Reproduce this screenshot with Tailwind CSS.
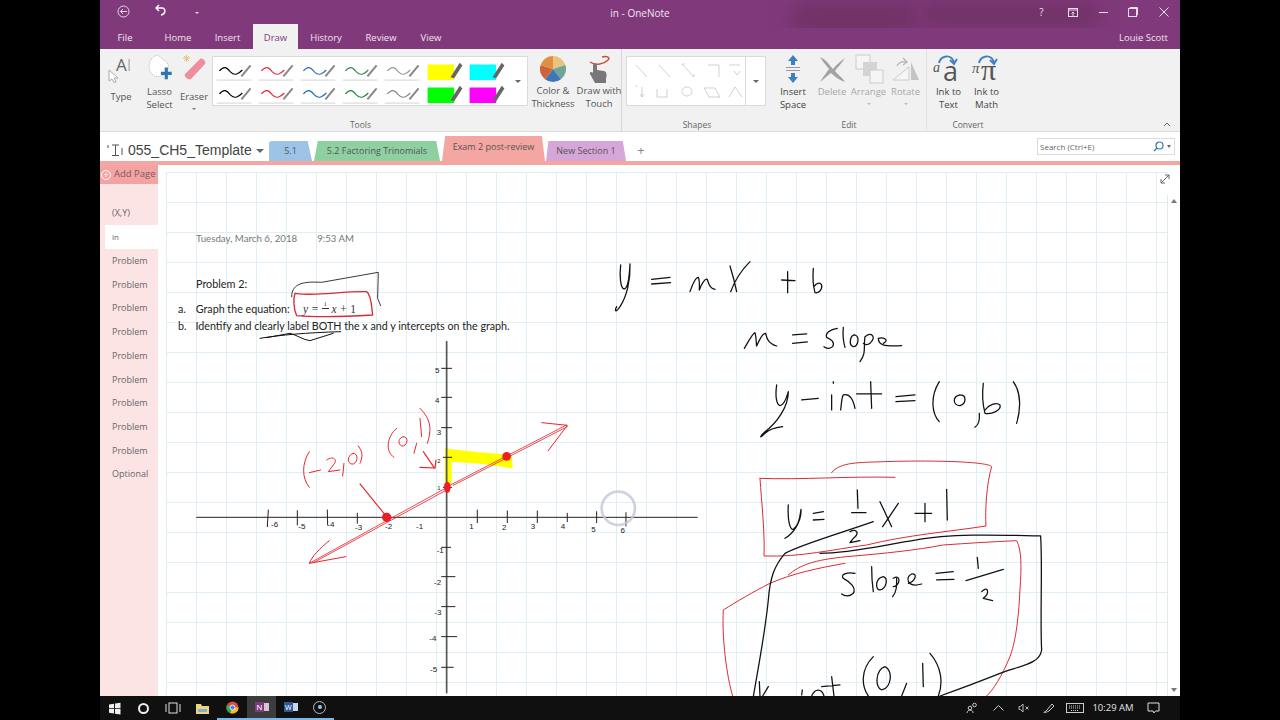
<!DOCTYPE html>
<html lang="en">
<head>
<meta charset="UTF-8">
<title>in - OneNote</title>
<script src="https://cdn.jsdelivr.net/npm/@tailwindcss/browser@4"></script>
</head>
<body class="bg-black overflow-hidden font-['Open_Sans',sans-serif]">
<svg class="hidden">
  <symbol id="pen" viewBox="0 0 40 24">
    <path d="M3 13C8 7 11 9 15 14C20 19 24 16 28 12" fill="none" stroke="currentColor" stroke-width="1.300"/>
    <path d="M27 19L37 7" stroke="#888" stroke-width="2.200"/>
    <path d="M0 23H38" stroke="#d0d0d0"/>
  </symbol>
  <symbol id="marker" viewBox="0 0 40 24">
    <rect x="1" y="6" width="29" height="17" fill="currentColor"/>
    <path d="M26 20L36 4L39 7L30 21Z" fill="#666"/>
  </symbol>
</svg>

<div class="flex w-[1280px] h-[720px]">
  <div class="w-[100px] bg-black"></div>

  <div class="w-[1080px] flex flex-col bg-white">
    <!-- title bar -->
    <div class="relative h-[28px] bg-[#80397b] text-white flex items-center">
      <div class="absolute left-[690px] top-0 w-[130px] h-[40px] bg-[#733369] blur-sm rounded-full"></div>
      <div class="absolute left-[820px] top-0 w-[180px] h-[30px] bg-[#733369] blur-sm rounded-full"></div>
      <svg class="absolute left-[17px] top-[5px]" width="13" height="13" viewBox="0 0 13 13" fill="none" stroke="#e8d8e8"><circle cx="6.500" cy="6.500" r="5.500"/><path d="M10 6.500H3.500M6 4L3.500 6.500L6 9"/></svg>
      <svg class="absolute left-[54px] top-[4px]" width="13" height="13" viewBox="0 0 13 13" fill="none" stroke="#fff" stroke-width="1.400"><path d="M5 1L2 4L5 7M2 4H8C12 4 12 10 7 11"/></svg>
      <div class="absolute left-[95px] top-[12px] w-0 h-0 border-x-[2px] border-x-transparent border-t-[2px] border-t-[#e8d8e8]"></div>
      <div class="relative w-full text-center text-[10px] text-[#f1e6f0] -mt-[2px]">in - OneNote</div>
      <div class="absolute right-0 top-0 h-[24px] flex items-center text-[#eadcea]">
        <span class="w-[31px] text-center text-[10px]">?</span>
        <span class="w-[31px] flex justify-center"><svg width="10" height="9" viewBox="0 0 10 9" fill="none" stroke="#eadcea"><rect x=".5" y=".5" width="9" height="8"/><path d="M1 2H9M5 8V4M3.500 5.500L5 4L6.500 5.500"/></svg></span>
        <span class="w-[30px] flex justify-center"><span class="w-[9px] h-px bg-[#eadcea]"></span></span>
        <span class="w-[30px] flex justify-center"><svg width="10" height="10" viewBox="0 0 10 10" fill="none" stroke="#eadcea"><rect x=".5" y="1.500" width="8" height="8"/><path d="M2 1V.5H9.500V8H9"/></svg></span>
        <span class="w-[32px] flex justify-center"><svg width="10" height="10" viewBox="0 0 10 10" stroke="#eadcea"><path d="M.5 .5L9.500 9.500M9.500 .5L.5 9.500"/></svg></span>
      </div>
    </div>

    <!-- menu tabs -->
    <div class="h-[21px] bg-[#80397b] flex text-[9.500px] text-[#f0e4ef] items-stretch relative">
      <span class="w-[50px] flex items-center justify-center">File</span>
      <span class="w-[56px] flex items-center justify-center">Home</span>
      <span class="w-[47px] flex items-center justify-center -ml-[2px] mr-[2px]">Insert</span>
      <span class="w-[45px] -mt-[4px] bg-[#f1f1f1] text-[#80397b] flex items-center justify-center pt-[4px]">Draw</span>
      <span class="w-[56px] flex items-center justify-center">History</span>
      <span class="w-[54px] flex items-center justify-center">Review</span>
      <span class="w-[46px] flex items-center justify-center">View</span>
      <span class="absolute right-[12px] top-[3px] text-[9.500px]">Louie Scott</span>
    </div>

    <!-- ribbon -->
    <div class="h-[83px] bg-[#f1f1f1] flex border-b border-[#dcdcdc] text-[9.500px] leading-[13px] text-[#555] relative">
      <!-- tools -->
      <div class="w-[522px] border-r border-[#d6d6d6] flex flex-col">
        <div class="h-[69px] flex pt-[6px]">
          <div class="w-[42px] flex flex-col items-center relative">
            <div class="h-[30px] w-full relative">
              <span class="absolute left-[16px] top-0 text-[17px] leading-[20px] text-[#666]">A</span>
              <span class="absolute left-[27px] top-[1px] text-[16px] leading-[18px] text-[#888] font-light">I</span>
              <svg class="absolute left-[8px] top-[14px]" width="12" height="14" viewBox="0 0 12 14" fill="#fff" stroke="#aaa"><path d="M1 1L10 9H6L8 13L6 13.500L4 10L1 12Z"/></svg>
            </div>
            <span class="mt-[5px]">Type</span>
          </div>
          <div class="w-[35px] flex flex-col items-center">
            <svg width="30" height="27" viewBox="0 0 30 30" class="-mt-[1px]"><path d="M5 6C9 0 14 1 17 5C21 8 25 9 24 16C22 22 17 26 10 25C3 22 1 13 5 6Z" fill="#fff" stroke="#bbb" stroke-dasharray="1.500 1"/><path d="M22 15V28M16 21.500H28" stroke="#2f75b5" stroke-width="3.500"/></svg>
            <span class="mt-[4px] text-center">Lasso Select</span>
          </div>
          <div class="w-[34px] flex flex-col items-center">
            <svg width="28" height="28" viewBox="0 0 28 28" class="-mt-[1px]"><path d="M3 4H10M6.500 1V8M4 2L9 7M9 2L4 7" stroke="#e8c36a"/><path d="M5 20L20 5C22 3 27 8 25 10L11 25C9 27 3 22 5 20Z" fill="#ee8e9e"/></svg>
            <span class="mt-[8px]">Eraser</span>
            <span class="mt-[5px] w-0 h-0 border-x-[2px] border-x-transparent border-t-[2px] border-t-[#777]"></span>
          </div>
          <div class="w-[316px] h-[50px] mt-[1px] ml-[1px] bg-white border border-[#dadada] flex">
            <div class="grid grid-cols-7 gap-x-[2px] gap-y-[1px] p-[2px] w-[296px]">
              <svg class="w-[40px] h-[22px] text-black"><use href="#pen"/></svg>
              <svg class="w-[40px] h-[22px] text-[#d9363e]"><use href="#pen"/></svg>
              <svg class="w-[40px] h-[22px] text-[#3a70b5]"><use href="#pen"/></svg>
              <svg class="w-[40px] h-[22px] text-[#2f8a4f]"><use href="#pen"/></svg>
              <svg class="w-[40px] h-[22px] text-[#999]"><use href="#pen"/></svg>
              <svg class="w-[40px] h-[22px] text-[#ffff00]"><use href="#marker"/></svg>
              <svg class="w-[40px] h-[22px] text-[#00ffff]"><use href="#marker"/></svg>
              <svg class="w-[40px] h-[22px] text-black"><use href="#pen"/></svg>
              <svg class="w-[40px] h-[22px] text-[#e8262d]"><use href="#pen"/></svg>
              <svg class="w-[40px] h-[22px] text-[#1d68b5]"><use href="#pen"/></svg>
              <svg class="w-[40px] h-[22px] text-[#178a3d]"><use href="#pen"/></svg>
              <svg class="w-[40px] h-[22px] text-[#888]"><use href="#pen"/></svg>
              <svg class="w-[40px] h-[22px] text-[#00ff00]"><use href="#marker"/></svg>
              <svg class="w-[40px] h-[22px] text-[#ff00ff]"><use href="#marker"/></svg>
            </div>
            <div class="flex-1 flex items-center justify-center"><span class="w-0 h-0 border-x-[3px] border-x-transparent border-t-[3px] border-t-[#666]"></span></div>
          </div>
          <div class="w-[48px] flex flex-col items-center ml-[1px]">
            <svg width="28" height="28" viewBox="0 0 28 28"><path d="M14 14L14 1A13 13 0 0 1 26.400 10Z" fill="#e8c27e"/><path d="M14 14L26.400 10A13 13 0 0 1 22 24.300Z" fill="#6fa595"/><path d="M14 14L22 24.300A13 13 0 0 1 6 24.300Z" fill="#3f76b8"/><path d="M14 14L6 24.300A13 13 0 0 1 1.600 10Z" fill="#cf6236"/><path d="M14 14L1.600 10A13 13 0 0 1 14 1Z" fill="#e08f3e"/></svg>
            <span class="mt-[1px] text-center whitespace-nowrap">Color &amp;<br>Thickness</span>
          </div>
          <div class="w-[44px] flex flex-col items-center">
            <svg width="30" height="29" viewBox="0 0 30 29"><path d="M6 7C12 11 20 9 24 5C27 2 22 1 18 2" fill="none" stroke="#c9503c" stroke-width="1.500"/><path d="M9 10C10 8 13 8 13 11V15L20 16C23 17 23 20 22 24V28H11L6 19C5 17 8 16 9 18Z" fill="#777"/></svg>
            <span class="text-center whitespace-nowrap">Draw with<br>Touch</span>
          </div>
        </div>
        <div class="text-center text-[8.500px] leading-[13px] mt-[2px] text-[#666]">Tools</div>
      </div>
      <!-- shapes -->
      <div class="w-[150px] flex flex-col">
        <div class="h-[69px] pt-[7px] pl-[4px]">
          <div class="w-[140px] h-[50px] bg-white border border-[#dadada] flex">
            <svg width="118" height="48" viewBox="0 0 118 48" fill="none" stroke="#bdbdbd" stroke-width=".7">
              <path d="M9 8L20 20M32 8L43 20M55 7L67 20M55 7H58M67 20V17M81 8H92V20M102 8H113M107 14L110 18L113 14"/>
              <path d="M9 28L10 30M15 30V40L17 37M13 37L15 40M30 32V40H40V32M60 30A5 4.500 0 1 0 60 39A5 4.500 0 1 0 60 30M77 31H88L93 40H82ZM102 40L108 30L115 40"/>
            </svg>
            <div class="flex-1 border-l border-[#dadada] flex items-center justify-center"><span class="w-0 h-0 border-x-[3px] border-x-transparent border-t-[3px] border-t-[#666]"></span></div>
          </div>
        </div>
        <div class="text-center text-[8.500px] leading-[13px] mt-[2px] text-[#666]">Shapes</div>
      </div>
      <!-- edit -->
      <div class="w-[155px] border-r border-[#e2e2e2] flex flex-col">
        <div class="h-[69px] flex pt-[5px] text-center">
          <div class="w-[42px] flex flex-col items-center">
            <svg width="16" height="30" viewBox="0 0 16 30"><path d="M8 1L13 7H10V11H6V7H3ZM8 29L13 23H10V19H6V23H3Z" fill="#3f7fc1"/><path d="M1 13.500H15M1 16.500H15" stroke="#999"/></svg>
            <span class="mt-[1px] text-[#444]">Insert<br>Space</span>
          </div>
          <div class="w-[36px] flex flex-col items-center">
            <svg width="30" height="30" viewBox="0 0 30 30"><path d="M3 3C10 6 13 12 16 15C20 10 24 7 28 4C24 10 20 14 18 17C21 21 26 24 28 28C22 26 18 23 14 19C10 22 7 25 3 28C6 23 9 19 12 15C9 11 6 8 3 3Z" fill="#a3a3a3"/></svg>
            <span class="mt-[1px] text-[#a8a8a8]">Delete</span>
          </div>
          <div class="w-[37px] flex flex-col items-center">
            <svg width="30" height="30" viewBox="0 0 30 30"><rect x="2" y="1" width="14" height="14" fill="#f5f5f5" stroke="#ccc"/><rect x="9" y="8" width="14" height="14" fill="#d4d4d4"/><rect x="16" y="16" width="13" height="13" fill="#f5f5f5" stroke="#ccc"/></svg>
            <span class="mt-[1px] text-[#a8a8a8]">Arrange</span>
            <span class="mt-[5px] w-0 h-0 border-x-[2px] border-x-transparent border-t-[2px] border-t-[#bbb]"></span>
          </div>
          <div class="w-[37px] flex flex-col items-center">
            <svg width="30" height="30" viewBox="0 0 30 30"><path d="M20 8L28 26H20Z" fill="#c4c4c4"/><path d="M2 26L18 13V26Z" fill="#f5f5f5" stroke="#ccc"/><path d="M6 12C8 8 11 7 15 8M12 4L16 8L12 11" fill="none" stroke="#bbb" stroke-width="1.500"/></svg>
            <span class="mt-[1px] text-[#a8a8a8]">Rotate</span>
            <span class="mt-[5px] w-0 h-0 border-x-[2px] border-x-transparent border-t-[2px] border-t-[#bbb]"></span>
          </div>
        </div>
        <div class="text-center text-[8.500px] leading-[13px] mt-[2px] text-[#666]">Edit</div>
      </div>
      <!-- convert -->
      <div class="w-[80px] pl-[2px] flex flex-col">
        <div class="h-[69px] flex pt-[5px] text-center text-[#444]">
          <div class="w-[39px] flex flex-col items-center relative">
            <div class="h-[30px] w-full relative text-[#555]">
              <span class="absolute left-[4px] top-[7px] text-[14px] leading-[14px] italic font-['Liberation_Serif']">a</span>
              <span class="absolute left-[14px] top-[3px] text-[27px] leading-[28px]">a</span>
              <svg class="absolute left-[8px] top-0" width="22" height="12" viewBox="0 0 22 12" fill="none" stroke="#3f7fc1" stroke-width="1.800"><path d="M2 9C4 1 14 0 17 8M13 6L17 10L20 5"/></svg>
            </div>
            <span class="mt-[1px]">Ink to<br>Text</span>
          </div>
          <div class="w-[37px] flex flex-col items-center relative">
            <div class="h-[30px] w-full relative text-[#555] font-['Liberation_Serif']">
              <span class="absolute left-[4px] top-[7px] text-[15px] leading-[14px] italic">π</span>
              <span class="absolute left-[13px] top-[1px] text-[30px] leading-[30px]">π</span>
              <svg class="absolute left-[9px] top-0" width="22" height="12" viewBox="0 0 22 12" fill="none" stroke="#3f7fc1" stroke-width="1.800"><path d="M2 9C4 1 14 0 17 8M13 6L17 10L20 5"/></svg>
            </div>
            <span class="mt-[1px]">Ink to<br>Math</span>
          </div>
        </div>
        <div class="text-center text-[8.500px] leading-[13px] mt-[2px] text-[#666]">Convert</div>
      </div>
      <svg class="absolute right-[9px] bottom-[4px]" width="8" height="5" viewBox="0 0 8 5" fill="none" stroke="#666"><path d="M1 4L4 1L7 4"/></svg>
    </div>

    <!-- notebook / section tabs -->
    <div class="h-[29px] bg-white flex items-end relative text-[#555]">
      <div class="absolute left-[7px] top-[8px] flex items-center gap-[3px]">
        <svg width="18" height="14" viewBox="0 0 18 14" fill="none" stroke="#555"><path d="M1 2V5M5 2H12M8.500 2V12M5 12.500H12M15 5V12"/></svg>
        <span class="text-[14px] leading-[20px] text-[#444] font-['Liberation_Sans']">055_CH5_Template</span>
        <span class="w-0 h-0 ml-[1px] mt-[2px] border-x-[4px] border-x-transparent border-t-[4px] border-t-[#666]"></span>
      </div>
      <div class="ml-[169px] w-[43px] h-[20px] bg-[#9dc3e6] rounded-t-[3px] text-[9px] flex items-center justify-center [clip-path:polygon(0_0,90%_0,100%_100%,0_100%)]">5.1</div>
      <div class="w-[126px] h-[20px] ml-[2px] bg-[#8ed09f] rounded-t-[3px] text-[9px] flex items-center justify-center [clip-path:polygon(3%_0,97%_0,100%_100%,0_100%)]">5.2 Factoring Trinomials</div>
      <div class="w-[103px] h-[25px] ml-[2px] bg-[#f4a6a3] rounded-t-[3px] text-[9px] flex items-center justify-center pb-[4px] [clip-path:polygon(3%_0,97%_0,100%_100%,0_100%)]">Exam 2 post-review</div>
      <div class="w-[80px] h-[20px] ml-[1px] bg-[#d7a6d9] rounded-t-[3px] text-[9px] flex items-center justify-center [clip-path:polygon(3%_0,96%_0,100%_100%,0_100%)]">New Section 1</div>
      <div class="w-[28px] h-[20px] ml-[1px] flex items-center justify-center text-[#888] text-[13px]">+</div>
      <div class="absolute right-[5px] top-[6px] w-[138px] h-[17px] border border-[#dcdcdc] flex items-center pl-[2px] pr-[3px] text-[8px] text-[#666]">
        <span class="flex-1">Search (Ctrl+E)</span>
        <svg width="11" height="11" viewBox="0 0 11 11" fill="none" stroke="#2f75b5" stroke-width="1.200"><circle cx="6.500" cy="4.500" r="3.500"/><path d="M4 7L1 10"/></svg>
        <span class="w-0 h-0 ml-[3px] border-x-[2.500px] border-x-transparent border-t-[3px] border-t-[#666]"></span>
      </div>
    </div>
    <div class="h-[4px] bg-[#f4a6a3]"></div>

    <!-- page area -->
    <div class="h-[531px] flex">
      <!-- page list -->
      <div class="w-[58px] bg-[#fde4e4] flex flex-col text-[9px] text-[#666]">
        <div class="h-[19px] bg-[#f4a3a3] flex items-center pl-[1px] gap-[3px] text-[#7a5a5a]">
          <span class="w-[10px] h-[10px] rounded-full border border-white text-white flex items-center justify-center text-[9px] leading-none">+</span>
          <span class="text-[9.500px]">Add Page</span>
        </div>
        <div class="h-[17px]"></div>
        <div class="h-[24px] pl-[12px] flex items-center">(X,Y)</div>
        <div class="h-[24px] ml-[5px] pl-[7px] flex items-center bg-white text-[8px]">in</div>
        <div class="h-[23.700px] pl-[12px] flex items-center">Problem</div>
        <div class="h-[23.700px] pl-[12px] flex items-center">Problem</div>
        <div class="h-[23.700px] pl-[12px] flex items-center">Problem</div>
        <div class="h-[23.700px] pl-[12px] flex items-center">Problem</div>
        <div class="h-[23.700px] pl-[12px] flex items-center">Problem</div>
        <div class="h-[23.700px] pl-[12px] flex items-center">Problem</div>
        <div class="h-[23.700px] pl-[12px] flex items-center">Problem</div>
        <div class="h-[23.700px] pl-[12px] flex items-center">Problem</div>
        <div class="h-[23.700px] pl-[12px] flex items-center">Problem</div>
        <div class="h-[23.700px] pl-[12px] flex items-center">Optional</div>
      </div>

      <!-- note canvas -->
      <div class="w-[1022px] relative overflow-hidden bg-white">
        <div class="absolute left-[8px] top-[7px] right-[12px] bottom-0 bg-[linear-gradient(#e0eff4_1px,transparent_1px),linear-gradient(90deg,#e0eff4_1px,transparent_1px)] bg-[size:30px_30px]"></div>
        <div class="absolute left-[38px] top-[66px] text-[9.700px] text-[#777] font-['Lato',sans-serif] flex gap-[20px]"><span>Tuesday, March 6, 2018</span><span>9:53 AM</span></div>
        <div class="absolute left-[38px] top-[111px] text-[10.800px] text-[#222] font-['Lato',sans-serif]">Problem 2:</div>
        <div class="absolute left-[20px] top-[136px] text-[10.700px] text-[#222] font-['Lato',sans-serif] flex gap-[10px]"><span>a.</span><span>Graph the equation:</span></div>
        <div class="absolute left-[145px] top-[136px] text-[11.500px] text-[#333] font-['Liberation_Serif'] italic whitespace-nowrap">y = <span class="inline-block w-[7px] text-[6px] align-top not-italic text-center leading-[7px] border-b border-[#333]">1</span> x + <span class="not-italic">1</span></div>
        <div class="absolute left-[20px] top-[153px] text-[10.700px] text-[#222] font-['Lato',sans-serif] flex gap-[9px] whitespace-nowrap"><span>b.</span><span>Identify and clearly label BOTH the x and y intercepts on the graph.</span></div>

        <!-- digital ink, viewBox uses page coordinates -->
        <svg class="absolute left-0 top-0" width="1022" height="531" viewBox="158 165 1022 531" fill="none" stroke-linecap="round" stroke-linejoin="round">
          <!-- problem markup -->
          <g transform="translate(100 165) scale(.3333)">
            <path d="M575 395C575 350 620 350 665 352L835 322L833 400L842 422" stroke="#111" stroke-width="2.500"/>
            <path d="M585 385C650 395 720 378 800 380C815 390 815 430 818 450C740 455 660 458 590 452C580 430 580 400 585 385Z" stroke="#d92b35" stroke-width="4"/>
            <path d="M480 520C540 510 620 503 722 500M500 518L570 505C590 510 610 525 630 527L700 505" stroke="#111" stroke-width="3"/>
          </g>

          <!-- graph -->
          <g transform="translate(190 340) scale(.3333)">
            <path d="M765 325L785 328C840 335 900 340 965 345L968 385L880 372L785 365L785 430L765 430Z" fill="#ffff00"/>
            <path d="M20 532H1522" stroke="#222" stroke-width="3"/>
            <path d="M770 5V1058" stroke="#555" stroke-width="5"/>
            <path d="M235 510L232 560M322 512V555M412 510L413 555M502 520V550M590 520V545M862 510V548M952 513V548M1042 513V548M1132 520V545M1220 515V548M1308 518V558" stroke="#222" stroke-width="3"/>
            <path d="M755 85H785M755 172H785M755 263H785M760 352H785M760 442H785M755 622H782M755 710H795M755 800H795M755 890H800M755 982H790" stroke="#222" stroke-width="3"/>
            <g fill="#222" font-size="24" font-family="Liberation Sans">
              <text x="735" y="100">5</text><text x="735" y="190">4</text><text x="740" y="285">3</text><text x="742" y="370" font-size="18">2</text><text x="742" y="450" font-size="18">1</text>
              <text x="740" y="640">-1</text><text x="732" y="735">-2</text><text x="733" y="825">-3</text><text x="718" y="903">-4</text><text x="720" y="995">-5</text>
              <text x="243" y="562">-6</text><text x="325" y="566">-5</text><text x="412" y="562">-4</text><text x="495" y="570">-3</text><text x="585" y="568">-2</text><text x="678" y="566">-1</text>
              <text x="838" y="568">1</text><text x="936" y="570">2</text><text x="1022" y="566">3</text><text x="1112" y="566">4</text><text x="1204" y="576">5</text><text x="1292" y="578">6</text>
            </g>
            <g stroke="#e8262d" stroke-width="2.500">
              <path d="M358 670L768 444M370 668L770 450M780 436L1130 255M790 436L1132 260"/>
              <path d="M1055 248L1132 256L1075 332M418 602C390 625 365 650 358 670L468 650" stroke-width="3"/>
              <path d="M510 432L590 530M700 335L732 382M690 382L735 384M738 360L735 385" stroke-width="3.500"/>
              <path d="M358 335C335 370 335 415 358 442M358 398L392 390M410 360C430 345 445 360 430 375L415 395L450 390M462 370L458 408M490 340C470 345 470 375 490 372C505 365 505 340 490 340M505 318C520 340 518 350 510 370" stroke-width="3"/>
              <path d="M620 265C590 290 585 335 612 352M640 290C620 295 625 320 640 318C655 312 655 290 640 290M680 310L672 340M690 235L695 290M690 205C725 240 725 270 712 310" stroke-width="3"/>
            </g>
            <g fill="#ee1c25"><circle cx="950" cy="349" r="13"/><ellipse cx="772" cy="442" rx="10" ry="17"/><circle cx="590" cy="532" r="14"/></g>
            <circle cx="1285" cy="505" r="50" stroke="#c4c6da" stroke-width="8" opacity=".8"/>
          </g>

          <!-- y = mx + b notes -->
          <g transform="translate(600 240) scale(.3333)" stroke="#111" stroke-width="3.800">
            <path d="M62 75C58 110 62 145 72 147C85 147 88 110 90 72C92 120 80 170 60 200C48 218 42 215 50 200"/>
            <path d="M155 118L210 112M155 132L212 128"/>
            <path d="M270 155C280 125 290 110 295 112C300 125 298 140 298 150C305 130 315 115 322 118C326 130 328 145 345 148"/>
            <path d="M390 78C400 110 405 130 410 155M450 65C425 90 405 120 392 155"/>
            <path d="M545 120L585 122M563 95V158"/>
            <path d="M640 85C638 110 640 140 645 158C655 160 668 150 665 135C660 125 648 130 642 140"/>
            <path d="M433 325C445 305 458 280 465 278C470 295 468 310 470 318C480 295 490 278 497 280C500 295 505 310 530 318"/>
            <path d="M578 285L620 282M578 310L622 306"/>
            <path d="M712 265C690 268 675 280 680 292C695 298 705 308 698 320C690 328 678 325 672 320"/>
            <path d="M730 262C728 285 730 305 735 322"/>
            <path d="M765 285C750 285 745 315 760 320C775 320 780 290 765 285"/>
            <path d="M795 290C790 320 800 340 780 365M795 290C815 275 830 290 810 310C800 318 790 310 790 310"/>
            <path d="M835 295C835 315 850 320 905 317M835 295C850 290 870 300 850 310"/>
            <path d="M530 435C525 470 530 495 540 497C555 495 560 470 565 455C565 500 530 550 495 575C475 595 480 595 495 580C510 565 530 562 548 560"/>
            <path d="M605 480L655 475M695 510V465M700 425V430"/>
            <path d="M722 510C725 490 725 470 730 465C750 460 760 480 765 505M770 462H845M812 425L815 505"/>
            <path d="M888 470L945 465M888 485L945 482"/>
            <path d="M1018 425C990 470 995 520 1018 545M1080 465C1055 470 1060 498 1080 497C1100 490 1100 465 1080 465"/>
            <path d="M1138 520C1140 540 1135 555 1125 562"/>
            <path d="M1150 430C1145 470 1150 500 1155 520C1175 525 1205 510 1200 495C1190 485 1165 495 1155 510"/>
            <path d="M1240 425C1265 460 1262 510 1250 550"/>
          </g>

          <!-- boxed work -->
          <g transform="translate(700 450) scale(.3333)">
            <g stroke="#d92b35" stroke-width="3">
              <path d="M180 85C300 90 450 78 585 82M180 85C185 160 195 250 192 318C300 322 400 298 500 285C620 255 750 245 858 228C855 180 860 100 875 50C865 35 700 30 550 35C480 38 420 35 395 68"/>
              <path d="M265 375C300 345 340 330 440 320C560 310 650 300 730 285C800 280 880 275 950 272C965 300 965 350 960 420C955 520 945 580 930 620C905 680 880 720 860 738"/>
              <path d="M435 340C350 355 280 370 210 400C160 425 110 455 70 480C65 560 80 680 98 738"/>
            </g>
            <g stroke="#111" stroke-width="3.800">
              <path d="M265 165C262 210 270 240 280 238C300 225 300 195 303 178C305 215 280 250 255 265"/>
              <path d="M340 190L370 185M340 210L372 208M472 120L474 175M455 188L498 188M450 245C470 235 480 250 460 265L450 278L480 272"/>
              <path d="M540 155L575 230M595 160L548 230M645 190L695 190M675 160V215M740 118L742 210"/>
              <path d="M520 215C420 250 300 285 255 310C225 345 210 380 205 450C195 550 175 650 160 740"/>
              <path d="M360 310C450 310 550 285 650 270C750 250 900 255 1022 258C1028 350 1020 500 1025 600C1020 640 970 645 900 670C850 690 770 720 720 738"/>
              <path d="M465 370C440 365 420 375 430 385C450 395 470 415 460 430C450 440 435 440 425 432M515 350C515 380 517 405 520 425"/>
              <path d="M550 380C525 385 525 420 540 420C560 415 565 385 550 380M580 385C605 370 600 410 580 410M590 385C590 410 590 425 578 440"/>
              <path d="M625 400C645 395 655 370 635 372C615 380 620 415 665 402M708 370L760 365M710 390L762 388"/>
              <path d="M832 322L835 355M798 392L910 358M845 425C865 405 870 430 850 445L878 452"/>
              <path d="M178 695L180 738M205 710L188 738M305 735L307 720M335 738C345 715 365 715 372 738M395 680L402 738M365 710L420 705"/>
              <path d="M520 620C480 660 485 710 505 738M555 650C525 660 525 715 545 720C575 715 580 660 555 650M620 700L605 738M668 640L670 710M690 610C725 650 730 700 715 738"/>
            </g>
          </g>
        </svg>

        <!-- expand + scrollbar -->
        <svg class="absolute right-[10px] top-[9px]" width="10" height="10" viewBox="0 0 10 10" fill="none" stroke="#666"><path d="M1 9L9 1M5 1H9V5M1 5V9H5"/></svg>
        <div class="absolute right-0 top-[30px] bottom-0 w-[13px] bg-white border-l border-[#e8e8e8] flex flex-col items-center justify-between py-[4px]">
          <span class="w-0 h-0 border-x-[3.500px] border-x-transparent border-b-[4px] border-b-[#777]"></span>
          <span class="w-0 h-0 border-x-[3.500px] border-x-transparent border-t-[4px] border-t-[#777]"></span>
        </div>
      </div>
    </div>

    <!-- taskbar -->
    <div class="h-[24px] bg-[#101010] flex items-stretch text-[#ddd] relative">
      <div class="w-[29px] flex items-center justify-center"><svg width="13" height="13" viewBox="0 0 13 13" fill="#eee"><path d="M1 2.500L6 1.700V6.200H1ZM7 1.500L12.500 .7V6.200H7ZM1 7H6V11.500L1 10.700ZM7 7H12.500V12.500L7 11.700Z"/></svg></div>
      <div class="w-[29px] flex items-center justify-center"><span class="w-[11px] h-[11px] rounded-full border-2 border-[#eee]"></span></div>
      <div class="w-[29px] flex items-center justify-center"><svg width="16" height="12" viewBox="0 0 16 12" fill="none" stroke="#ddd"><rect x="4" y="1" width="8" height="10"/><path d="M1 2V10M15 2V10"/></svg></div>
      <div class="w-[30px] flex items-center justify-center"><svg width="13" height="11" viewBox="0 0 13 11"><path d="M0 1H5L6 3H13V11H0Z" fill="#f3d27a"/><path d="M2 6H11V9H2Z" fill="#6fb6d8"/></svg></div>
      <div class="w-[30px] flex items-center justify-center border-b-2 border-[#76b9ed]"><svg width="13" height="13" viewBox="0 0 13 13"><circle cx="6.500" cy="6.500" r="6" fill="#dd4b3e"/><path d="M6.500 6.500L12.500 6.500A6 6 0 0 1 4 12Z" fill="#f4c20d"/><path d="M6.500 6.500L4 12A6 6 0 0 1 .8 4Z" fill="#3aa757"/><circle cx="6.500" cy="6.500" r="2.500" fill="#4285f4" stroke="#fff" stroke-width=".8"/></svg></div>
      <div class="w-[29px] bg-[#3c3c3c] flex items-center justify-center border-b-2 border-[#76b9ed]"><svg width="14" height="12" viewBox="0 0 14 12"><rect x="8" y="2" width="6" height="8" fill="#d8c4d8"/><rect x="0" y="1" width="9" height="10" fill="#80397b"/><text x="1.500" y="9" font-size="8" fill="#fff" font-family="Liberation Sans">N</text></svg></div>
      <div class="w-[29px] flex items-center justify-center border-b-2 border-[#76b9ed]"><svg width="14" height="12" viewBox="0 0 14 12"><rect x="8" y="2" width="6" height="8" fill="#c8d6ea"/><rect x="0" y="1" width="9" height="10" fill="#2b5797"/><text x="1" y="9" font-size="7" fill="#fff" font-family="Liberation Sans">W</text></svg></div>
      <div class="w-[29px] flex items-center justify-center border-b-2 border-[#76b9ed]"><span class="w-[13px] h-[13px] rounded-full border border-[#bbb] flex items-center justify-center"><span class="w-[4px] h-[4px] rounded-full bg-[#8fc7ee]"></span></span></div>
      <div class="flex-1"></div>
      <div class="flex items-center text-[9.500px] text-[#e4e4e4]">
        <span class="w-[26px] flex justify-center"><svg width="12" height="12" viewBox="0 0 12 12" fill="none" stroke="#ccc"><circle cx="4" cy="6" r="1.800"/><circle cx="8.500" cy="3" r="1.800"/><path d="M1 11C1 9 3 8 4 8C6 8 7 9 7 11"/></svg></span>
        <span class="w-[26px] flex justify-center"><svg width="11" height="6" viewBox="0 0 11 6" fill="none" stroke="#ccc"><path d="M.5 5.500L5.500 .5L10.500 5.500"/></svg></span>
        <span class="w-[25px] flex justify-center"><svg width="12" height="10" viewBox="0 0 12 10" fill="none" stroke="#bbb"><path d="M1 3.500V6.500H2.500L5 9V1L2.500 3.500ZM7.500 3.500L10.500 6.500M10.500 3.500L7.500 6.500"/></svg></span>
        <span class="w-[26px] flex justify-center"><svg width="12" height="12" viewBox="0 0 12 12" fill="none" stroke="#ccc"><path d="M1 11C1 9 3 10 4 8L9 2L11 4L6 9C4 10 3 10 2 11"/></svg></span>
        <span class="w-[25px] flex justify-center"><svg width="18" height="10" viewBox="0 0 18 10" fill="none" stroke="#ccc"><rect x=".5" y=".5" width="17" height="9"/><path d="M3 3H15M3 5H15M5 7.500H13" stroke-dasharray="1 1"/></svg></span>
        <span class="w-[52px] text-center whitespace-nowrap">10:29 AM</span>
        <span class="w-[29px] flex justify-center"><svg width="13" height="12" viewBox="0 0 13 12" fill="none" stroke="#ddd"><path d="M1 1H12V9H8.500L7 11L6 9H1Z"/></svg></span>
        <span class="w-[12px]"></span>
      </div>
    </div>
  </div>

  <div class="w-[100px] bg-black"></div>
</div>
</body>
</html>
